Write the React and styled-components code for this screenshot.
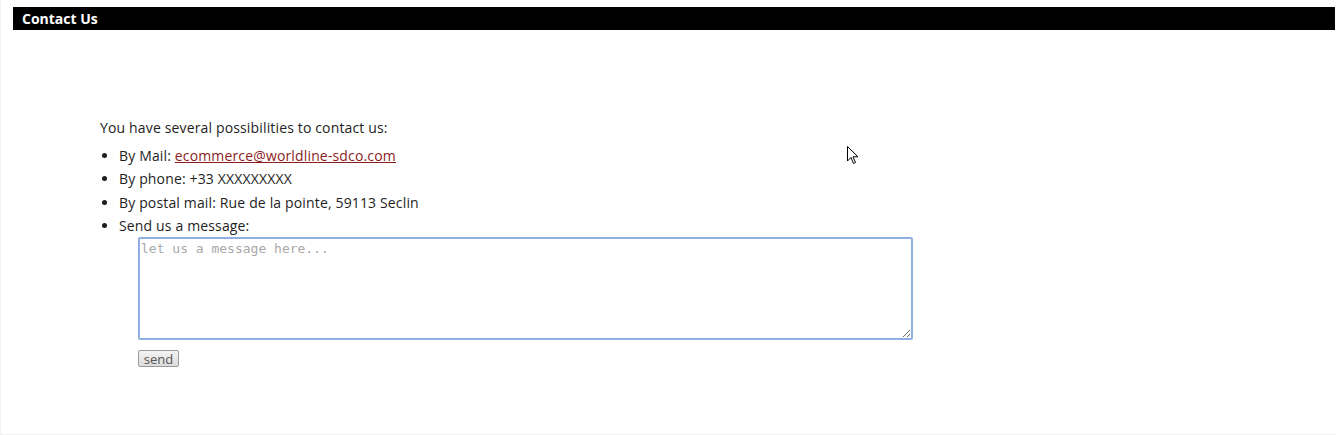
import React from "react";
import styled, { createGlobalStyle } from "styled-components";

const GlobalStyle = createGlobalStyle`
  html, body {
    margin: 0;
    padding: 0;
    background: #fff;
  }
  body {
    font-family: "Open Sans", "Liberation Sans", sans-serif;
    color: #1e1e1e;
  }
`;

const Page = styled.div`
  position: relative;
  height: 435px;
  box-sizing: border-box;
  padding: 7px 1px 0 12px;
  border-left: 1px solid #f2f2f2;
  border-bottom: 1px solid #f2f2f2;
`;

const TitleBar = styled.div`
  background: #000;
  color: #fff;
  height: 23px;
  line-height: 23px;
  padding-left: 9px;
  font-size: 14px;
  font-weight: 700;
`;

const Content = styled.div`
  padding: 86px 0 0 87px;
  font-size: 14px;
  letter-spacing: 0.15px;
`;

const Intro = styled.p`
  margin: 0 0 5px;
  line-height: 23px;
`;

const List = styled.ul`
  margin: 0;
  padding-left: 19px;
  line-height: 23.3px;
`;

const Item = styled.li`
  margin: 0;
`;

const MailLink = styled.a`
  color: #8b1c1c;
  text-decoration: underline;
`;

const MessageBox = styled.textarea`
  display: block;
  box-sizing: border-box;
  width: 775px;
  height: 103px;
  margin: 0 0 0 38px;
  padding: 2px 2px 2px 1px;
  border: 2px solid #8fb0e0;
  border-radius: 2px;
  font-family: "DejaVu Sans Mono", "Liberation Mono", monospace;
  font-size: 13px;
  letter-spacing: 0;
  color: #222;
  outline: none;
  resize: both;
  &::placeholder {
    color: #a8a8a8;
  }
`;

const SendButton = styled.button`
  display: block;
  margin: 10px 0 0 38px;
  height: 17px;
  width: 41px;
  padding: 0;
  font-family: "Open Sans", "Liberation Sans", sans-serif;
  font-size: 13px;
  line-height: 14px;
  color: #555;
  background: linear-gradient(#f4f4f4, #dcdcdc);
  border: 1px solid #9a9a9a;
  border-radius: 2px;
`;

const Cursor = styled.svg`
  position: absolute;
  left: 846px;
  top: 146px;
`;

export default function App() {
  return (
    <>
      <GlobalStyle />
      <Page>
        <TitleBar>Contact Us</TitleBar>
        <Content>
          <Intro>You have several possibilities to contact us:</Intro>
          <List>
            <Item>
              By Mail: <MailLink href="#">ecommerce@worldline-sdco.com</MailLink>
            </Item>
            <Item>By phone: +33 XXXXXXXXX</Item>
            <Item>By postal mail: Rue de la pointe, 59113 Seclin</Item>
            <Item>Send us a message:</Item>
          </List>
          <MessageBox placeholder="let us a message here..." />
          <SendButton>send</SendButton>
        </Content>
        <Cursor width="13" height="19" viewBox="0 0 13 19">
          <path
            d="M0.5 0.5 L0.5 15 L4 11.5 L6.5 17.5 L8.5 16.5 L6 10.8 L11 10.8 Z"
            fill="#fff"
            stroke="#000"
            strokeWidth="1"
            strokeLinejoin="miter"
          />
        </Cursor>
      </Page>
    </>
  );
}
